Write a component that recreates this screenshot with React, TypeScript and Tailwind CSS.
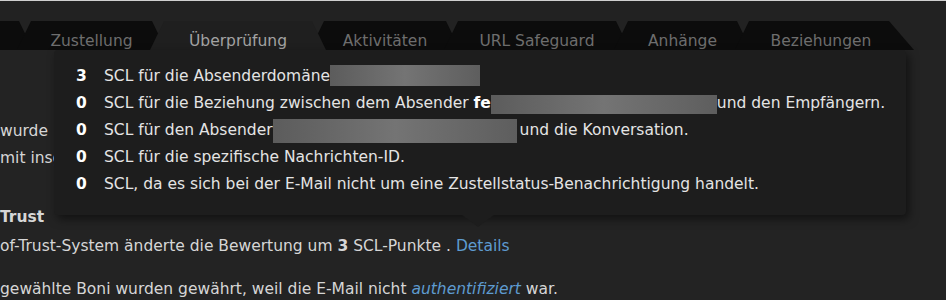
import React from "react";

type Tab = { label: string; w: string; active?: boolean; last?: boolean };

const tabs: Tab[] = [
  { label: "", w: "w-[121px]" },
  { label: "Zustellung", w: "w-[149px]" },
  { label: "Überprüfung", w: "w-[176px]", active: true },
  { label: "Aktivitäten", w: "w-[150px]" },
  { label: "URL Safeguard", w: "w-[186px]" },
  { label: "Anhänge", w: "w-[137px]" },
  { label: "Beziehungen", w: "w-[179px]", last: true },
];

function Redact({ className }: { className: string }) {
  return (
    <span
      className={`inline-block align-middle blur-[0.6px] bg-gradient-to-r from-[#5c5c5c] via-[#747474] to-[#5e5e5e] ${className}`}
    />
  );
}

export default function App() {
  return (
    <div className="relative w-[946px] h-[300px] overflow-hidden bg-[#232323] font-['DejaVu_Sans',sans-serif] text-[15.5px]">
      <div className="h-px bg-[#cfcfcf]" />
      <div className="h-[20px] bg-[#222222]" />

      {/* tab strip */}
      <div className="flex h-[29px] -ml-[80px] bg-[#222222]">
        {tabs.map((t, i) => (
          <div
            key={i}
            className={`relative flex-none h-full ${t.w} ${t.last ? "-ml-[8px] pr-[7px] [clip-path:polygon(14px_0,154px_0,100%_100%,0_100%)]" : "-mx-[8px] [clip-path:polygon(14px_0,calc(100%-14px)_0,100%_100%,0_100%)]"} ${
              t.active ? "z-10 bg-[#1f1f1f] text-[#a3a3a3]" : "bg-[#0c0c0c] text-[#6e6e6e]"
            } flex justify-center pt-[10px] leading-[20px] whitespace-nowrap`}
          >
            {t.label}
          </div>
        ))}
      </div>

      {/* page content (mostly hidden by tooltip) */}
      <div className="text-[#d6d6d6] leading-[27px] whitespace-nowrap">
        <div className="mt-[68px] w-[54px] overflow-hidden">wurde</div>
        <div className="w-[54px] overflow-hidden">mit insgesamt</div>
        <div className="mt-[32px] font-bold">Trust</div>
        <div className="mt-[2px]">
          of-Trust-System änderte die Bewertung um <span className="font-bold">3</span> SCL-Punkte .{" "}
          <span className="text-[#5e9bd0]">Details</span>
        </div>
        <div className="mt-[16px]">
          gewählte Boni wurden gewährt, weil die E-Mail nicht{" "}
          <span className="italic text-[#5e9bd0]">authentifiziert</span> war.
        </div>
      </div>

      {/* tooltip */}
      <div className="absolute left-[54px] top-[50px] w-[852px] h-[165px] rounded-[4px] bg-[#1d1d1d] shadow-[3px_4px_10px_rgba(0,0,0,0.5)] z-20">
        <div className="pt-[13px] pl-[22px] text-[#e4e4e4] leading-[27px] whitespace-nowrap">
          <div className="flex">
            <span className="w-[28px] flex-none font-bold text-white">3</span>
            <span>
              SCL für die Absenderdomäne
              <Redact className="w-[150px] h-[21px] -mt-[3px]" />
            </span>
          </div>
          <div className="flex">
            <span className="w-[28px] flex-none font-bold text-white">0</span>
            <span>
              SCL für die Beziehung zwischen dem Absender <span className="font-bold text-white">fe</span>
              <Redact className="w-[226px] h-[19px] mt-[2px]" />
              und den Empfängern.
            </span>
          </div>
          <div className="flex">
            <span className="w-[28px] flex-none font-bold text-white">0</span>
            <span>
              SCL für den Absender
              <Redact className="w-[244px] h-[24px] mr-[3px]" />
              und die Konversation.
            </span>
          </div>
          <div className="flex">
            <span className="w-[28px] flex-none font-bold text-white">0</span>
            <span>SCL für die spezifische Nachrichten-ID.</span>
          </div>
          <div className="flex">
            <span className="w-[28px] flex-none font-bold text-white">0</span>
            <span>SCL, da es sich bei der E-Mail nicht um eine Zustellstatus-Benachrichtigung handelt.</span>
          </div>
        </div>
        <div className="absolute left-[408px] top-[165px] w-0 h-0 border-x-[16px] border-t-[12px] border-x-transparent border-t-[#1d1d1d]" />
      </div>
    </div>
  );
}
